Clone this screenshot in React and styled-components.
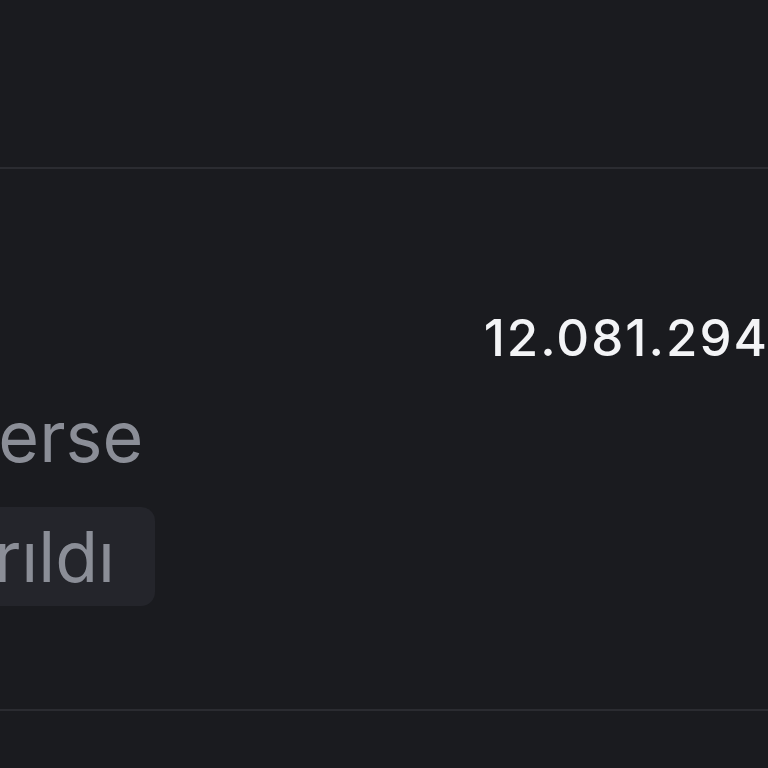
import React from "react";
import styled, { createGlobalStyle } from "styled-components";

const GlobalStyle = createGlobalStyle`
  html, body {
    margin: 0;
    padding: 0;
    background: #1a1b1f;
  }
  body {
    font-family: Inter, "Noto Sans", sans-serif;
    overflow: hidden;
  }
`;

const Page = styled.div`
  width: 768px;
  height: 768px;
  overflow: hidden;
  background: #1a1b1f;
`;

const Header = styled.div`
  height: 167px;
  border-bottom: 2px solid #2b2c31;
`;

const Row = styled.div`
  display: flex;
  flex-direction: row;
  justify-content: space-between;
  align-items: flex-start;
  padding: 138px 0 103px 0;
  border-bottom: 2px solid #2b2c31;
`;

const Info = styled.div`
  display: flex;
  flex-direction: column;
  align-items: flex-start;
  gap: 28px;
  margin-top: 87px;
  margin-left: -150px;
`;

const Subtitle = styled.span`
  font-size: 70px;
  line-height: normal;
  color: #8b8e97;
`;

const Badge = styled.span`
  display: inline-block;
  padding: 7px 40px 7px 61px;
  border-radius: 14px;
  background: #24252b;
  color: #8b8e97;
  font-size: 70px;
  line-height: normal;
`;

const Amount = styled.span`
  margin-right: -1px;
  font-size: 51px;
  line-height: normal;
  font-weight: 500;
  letter-spacing: 2px;
  color: #f3f4f6;
`;

const App = () => {
  return (
    <Page>
      <GlobalStyle />
      <Header />
      <Row>
        <Info>
          <Subtitle>Universe</Subtitle>
          <Badge>Ayrıldı</Badge>
        </Info>
        <Amount>12.081.294</Amount>
      </Row>
    </Page>
  );
};

export default App;
